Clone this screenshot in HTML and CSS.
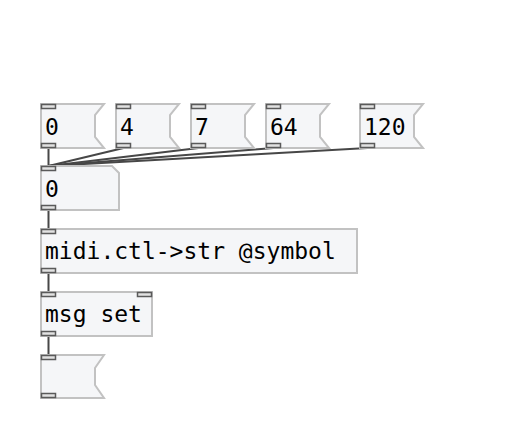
FILE: index.html
```html
<!DOCTYPE html>
<html lang="en">
<head>
  <meta charset="UTF-8">
  <title>midi.ctl->str</title>
  <link rel="stylesheet" href="styles.css">
</head>
<body>
  <svg class="patch" width="509" height="432" viewBox="0 0 509 432">
    <!-- connections -->
    <g class="cords">
      <line x1="48.5" y1="148" x2="48.5" y2="166"/>
      <line x1="123.5" y1="148" x2="48.5" y2="166"/>
      <line x1="198.5" y1="148" x2="48.5" y2="166"/>
      <line x1="273.5" y1="148" x2="48.5" y2="166"/>
      <line x1="367.5" y1="148" x2="48.5" y2="166"/>
      <line x1="48.5" y1="210" x2="48.5" y2="229"/>
      <line x1="48.5" y1="273" x2="48.5" y2="292"/>
      <line x1="48.5" y1="336" x2="48.5" y2="355"/>
    </g>

    <!-- message boxes -->
    <polygon class="box" points="41,104 104,104 95,115 95,137 104,148 41,148"/>
    <polygon class="box" points="116,104 179,104 170,115 170,137 179,148 116,148"/>
    <polygon class="box" points="191,104 254,104 245,115 245,137 254,148 191,148"/>
    <polygon class="box" points="266,104 329,104 320,115 320,137 329,148 266,148"/>
    <polygon class="box" points="360,104 423,104 414,115 414,137 423,148 360,148"/>
    <text class="lbl" x="45" y="135">0</text>
    <text class="lbl" x="120" y="135">4</text>
    <text class="lbl" x="195" y="135">7</text>
    <text class="lbl" x="270" y="135">64</text>
    <text class="lbl" x="364" y="135">120</text>

    <!-- number box -->
    <polygon class="box" points="41,166 112,166 119,173 119,210 41,210"/>
    <text class="lbl" x="45" y="197">0</text>

    <!-- objects -->
    <rect class="box" x="41" y="229" width="316" height="44"/>
    <text class="lbl" x="45" y="259">midi.ctl-&gt;str @symbol</text>
    <rect class="box" x="41" y="292" width="111" height="44"/>
    <text class="lbl" x="45" y="322">msg set</text>

    <!-- symbol box -->
    <polygon class="box" points="41,355 104,355 95,368 95,385 104,398 41,398"/>

    <!-- inlets / outlets -->
    <g class="port">
      <rect x="41.5" y="104.5" width="14" height="4"/>
      <rect x="41.5" y="143.5" width="14" height="4"/>
      <rect x="116.5" y="104.5" width="14" height="4"/>
      <rect x="116.5" y="143.5" width="14" height="4"/>
      <rect x="191.5" y="104.5" width="14" height="4"/>
      <rect x="191.5" y="143.5" width="14" height="4"/>
      <rect x="266.5" y="104.5" width="14" height="4"/>
      <rect x="266.5" y="143.5" width="14" height="4"/>
      <rect x="360.5" y="104.5" width="14" height="4"/>
      <rect x="360.5" y="143.5" width="14" height="4"/>
      <rect x="41.5" y="166.5" width="14" height="4"/>
      <rect x="41.5" y="205.5" width="14" height="4"/>
      <rect x="41.5" y="229.5" width="14" height="4"/>
      <rect x="41.5" y="268.5" width="14" height="4"/>
      <rect x="41.5" y="292.5" width="14" height="4"/>
      <rect x="137.5" y="292.5" width="14" height="4"/>
      <rect x="41.5" y="331.5" width="14" height="4"/>
      <rect x="41.5" y="355.5" width="14" height="4"/>
      <rect x="41.5" y="393.5" width="14" height="4"/>
    </g>
  </svg>
</body>
</html>
```

FILE: styles.css
```css
body{
  margin: 0;
  background: #fff;
}
.patch{
  display: block;
}
.cords line{
  stroke: #474747;
  stroke-width: 2;
}
.box{
  fill: #f5f6f8;
  stroke: #c2c2c2;
  stroke-width: 2;
}
.lbl{
  font-family: "DejaVu Sans Mono", "Liberation Mono", monospace;
  font-size: 23px;
  fill: #000;
}
.port rect{
  fill: #e2e2e2;
  stroke: #5a5a5a;
  stroke-width: 1.5;
}
```
